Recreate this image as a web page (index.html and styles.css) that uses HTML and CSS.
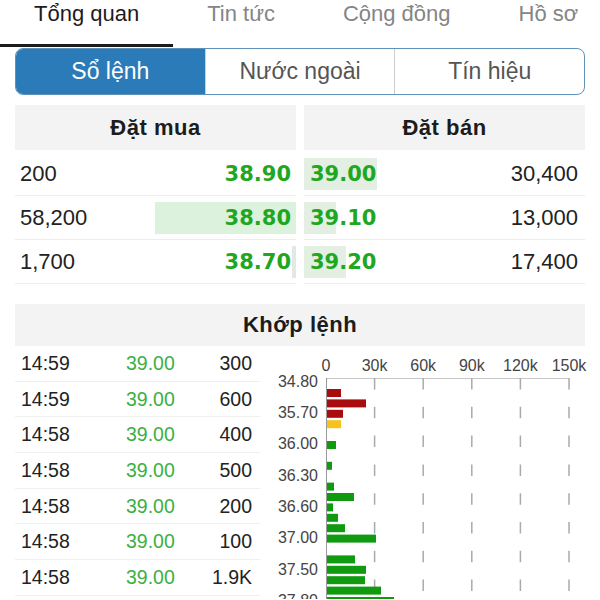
FILE: index.html
```html
<!DOCTYPE html>
<html lang="vi">
<head>
    <meta charset="UTF-8">
    <title>Sổ lệnh</title>
    <link rel="stylesheet" href="styles.css">
</head>
<body>
    <nav class="tabs">
        <div class="tab active">Tổng quan</div>
        <div class="tab">Tin tức</div>
        <div class="tab">Cộng đồng</div>
        <div class="tab">Hồ sơ</div>
    </nav>

    <div class="content">
        <div class="segmented">
            <div class="segment active">Sổ lệnh</div>
            <div class="segment">Nước ngoài</div>
            <div class="segment">Tín hiệu</div>
        </div>

        <div class="book">
            <div class="book-col buy">
                <div class="book-head">Đặt mua</div>
                <div class="book-row">
                    <span class="qty">200</span>
                    <span class="price">38.90</span>
                </div>
                <div class="book-row">
                    <div class="bar" style="width: 141px"></div>
                    <span class="qty">58,200</span>
                    <span class="price">38.80</span>
                </div>
                <div class="book-row">
                    <div class="bar grey" style="width: 4px"></div>
                    <span class="qty">1,700</span>
                    <span class="price">38.70</span>
                </div>
            </div>
            <div class="book-col sell">
                <div class="book-head">Đặt bán</div>
                <div class="book-row">
                    <div class="bar" style="width: 73px"></div>
                    <span class="price">39.00</span>
                    <span class="qty">30,400</span>
                </div>
                <div class="book-row">
                    <div class="bar" style="width: 32px"></div>
                    <span class="price">39.10</span>
                    <span class="qty">13,000</span>
                </div>
                <div class="book-row">
                    <div class="bar" style="width: 42px"></div>
                    <span class="price">39.20</span>
                    <span class="qty">17,400</span>
                </div>
            </div>
        </div>

        <div class="match-head">Khớp lệnh</div>
        <div class="match-body">
            <div class="trades">
                <div class="trade"><span>14:59</span><span class="trade-price">39.00</span><span>300</span></div>
                <div class="trade"><span>14:59</span><span class="trade-price">39.00</span><span>600</span></div>
                <div class="trade"><span>14:58</span><span class="trade-price">39.00</span><span>400</span></div>
                <div class="trade"><span>14:58</span><span class="trade-price">39.00</span><span>500</span></div>
                <div class="trade"><span>14:58</span><span class="trade-price">39.00</span><span>200</span></div>
                <div class="trade"><span>14:58</span><span class="trade-price">39.00</span><span>100</span></div>
                <div class="trade"><span>14:58</span><span class="trade-price">39.00</span><span>1.9K</span></div>
            </div>

            <svg class="chart" width="325" height="253" viewBox="0 0 325 253">
                <!-- volume axis -->
                <text class="x-label" x="66" y="25">0</text>
                <text class="x-label" x="114.6" y="25">30k</text>
                <text class="x-label" x="163.2" y="25">60k</text>
                <text class="x-label" x="211.8" y="25">90k</text>
                <text class="x-label" x="260.4" y="25">120k</text>
                <text class="x-label" x="309" y="25">150k</text>
                <line class="axis-top" x1="66" y1="32.5" x2="309" y2="32.5"/>
                <line class="grid" x1="114.6" y1="32" x2="114.6" y2="253"/>
                <line class="grid" x1="163.2" y1="32" x2="163.2" y2="253"/>
                <line class="grid" x1="211.8" y1="32" x2="211.8" y2="253"/>
                <line class="grid" x1="260.4" y1="32" x2="260.4" y2="253"/>
                <line class="grid" x1="309" y1="32" x2="309" y2="253"/>
                <line class="axis" x1="66.5" y1="32" x2="66.5" y2="253"/>

                <!-- price axis -->
                <text class="y-label" x="58" y="40.5">34.80</text>
                <text class="y-label" x="58" y="71.9">35.70</text>
                <text class="y-label" x="58" y="103.2">36.00</text>
                <text class="y-label" x="58" y="134.6">36.30</text>
                <text class="y-label" x="58" y="165.9">36.60</text>
                <text class="y-label" x="58" y="197.3">37.00</text>
                <text class="y-label" x="58" y="228.6">37.50</text>
                <text class="y-label" x="58" y="260">37.80</text>

                <!-- volume bars -->
                <rect class="down" x="67" y="43" width="14" height="8"/>
                <rect class="down" x="67" y="53.4" width="39" height="8"/>
                <rect class="down" x="67" y="63.8" width="16" height="8"/>
                <rect class="ref" x="67" y="74.2" width="14" height="8"/>
                <rect class="up" x="67" y="95" width="9" height="8"/>
                <rect class="up" x="67" y="115.8" width="5" height="8"/>
                <rect class="up" x="67" y="136.6" width="7" height="8"/>
                <rect class="up" x="67" y="147" width="27" height="8"/>
                <rect class="up" x="67" y="157.4" width="6" height="8"/>
                <rect class="up" x="67" y="167.8" width="11" height="8"/>
                <rect class="up" x="67" y="178.2" width="18" height="8"/>
                <rect class="up" x="67" y="188.6" width="49" height="8"/>
                <rect class="up" x="67" y="209.4" width="28" height="8"/>
                <rect class="up" x="67" y="219.8" width="39" height="8"/>
                <rect class="up" x="67" y="230.2" width="38" height="8"/>
                <rect class="up" x="67" y="240.6" width="54" height="8"/>
                <rect class="up" x="67" y="251" width="67" height="8"/>
            </svg>
        </div>
    </div>
</body>
</html>
```

FILE: styles.css
```css
body {
    margin: 0;
    font-family: "Liberation Sans", Arial, sans-serif;
    color: #222;
    background: #fff;
    width: 600px;
    overflow: hidden;
}

/* top tabs */
.tabs {
    display: flex;
    align-items: flex-start;
    height: 47px;
    overflow: hidden;
}

.tab {
    flex: none;
    height: 42px;
    padding: 2px 34px 0;
    font-size: 22px;
    line-height: 24px;
    color: #858585;
}

.tab.active {
    color: #1c1c1c;
    border-bottom: 3px solid #1c1c1c;
}

.content {
    padding: 0 15px;
}

/* segmented control */
.segmented {
    display: flex;
    height: 45px;
    margin-top: 1px;
    border: 1px solid #5f92b9;
    border-radius: 8px;
    overflow: hidden;
}

.segment {
    flex: 1;
    text-align: center;
    font-size: 23px;
    line-height: 45px;
    color: #555;
    border-left: 1px solid #cfcfcf;
}

.segment:first-child {
    border-left: none;
}

.segment.active {
    background: #2c7bb9;
    color: #fff;
}

/* order book */
.book {
    display: grid;
    grid-template-columns: 1fr 1fr;
    column-gap: 8px;
    margin-top: 10px;
}

.book-head,
.match-head {
    background: #f3f3f3;
    text-align: center;
    font-weight: bold;
    font-size: 22px;
    letter-spacing: 0.5px;
    color: #1c1c1c;
}

.book-head {
    height: 45px;
    line-height: 45px;
    margin-bottom: 2px;
}

.book-row {
    position: relative;
    display: flex;
    justify-content: space-between;
    align-items: center;
    height: 43px;
    border-bottom: 1px solid #ececec;
    font-size: 22px;
}

.buy .book-row {
    padding: 0 5px;
}

.sell .book-row {
    padding: 0 7px 0 6px;
}

.bar {
    position: absolute;
    top: 6px;
    bottom: 5px;
    background: #dcf2dc;
}

.buy .bar {
    right: 0;
}

.sell .bar {
    left: 0;
    background: #e2efe2;
}

.bar.grey {
    background: #e4e8e4;
}

.qty,
.price {
    position: relative;
}

.price {
    font-family: "DejaVu Sans", "Liberation Sans", sans-serif;
    font-weight: bold;
    font-size: 21px;
    color: #1fa71f;
}

/* matched orders */
.match-head {
    height: 42px;
    line-height: 42px;
    margin-top: 20px;
}

.match-body {
    display: flex;
}

.trades {
    flex: none;
    width: 245px;
}

.trade {
    display: grid;
    grid-template-columns: 105px 1fr auto;
    height: 34.7px;
    line-height: 35.5px;
    padding: 0 8px 0 6px;
    border-bottom: 1px solid #efefef;
    font-size: 19.5px;
}

.trade-price {
    color: #3cb043;
}

.chart {
    display: block;
    flex: none;
    overflow: visible;
}

.chart text {
    font-family: "Liberation Sans", Arial, sans-serif;
    font-size: 16px;
    fill: #444;
}

.chart .x-label {
    text-anchor: middle;
}

.chart .y-label {
    text-anchor: end;
}

.axis {
    stroke: #999;
    stroke-width: 1;
}

.axis-top {
    stroke: #c6c6c6;
    stroke-width: 1;
}

.grid {
    stroke: #aaa;
    stroke-width: 1.5;
    stroke-dasharray: 11.5 17.3;
}

.down {
    fill: #a80c0c;
}

.ref {
    fill: #f6c31c;
}

.up {
    fill: #0f9a0f;
}
```
